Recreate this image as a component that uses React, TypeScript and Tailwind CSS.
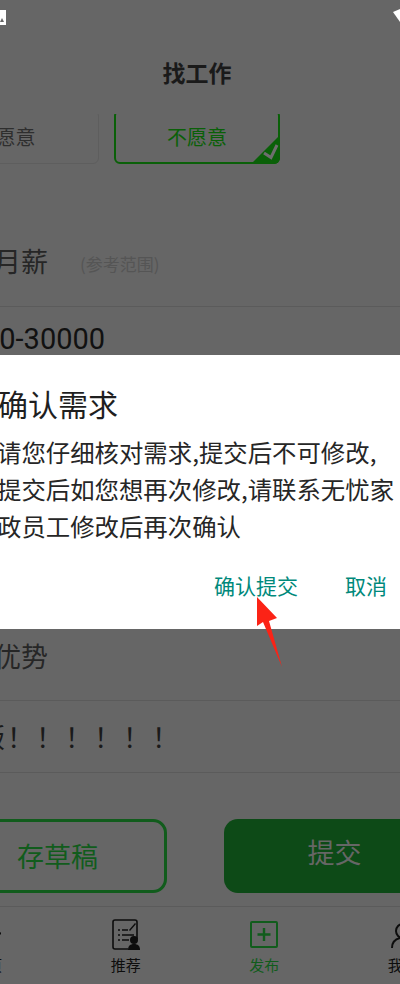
const cjk = "font-['Noto_Sans_CJK_SC','Noto_Sans_CJK_JP',sans-serif]";

function TabItem({ label, active, children }: { label: string; active?: boolean; children: React.ReactNode }) {
  return (
    <div className="flex flex-col items-center">
      <div className="h-[34px] flex items-end">{children}</div>
      <span className={`mt-[5px] text-[15px] leading-[20px] whitespace-nowrap ${active ? 'text-[#115c1c]' : 'text-[#0d0d0d]'}`}>
        {label}
      </span>
    </div>
  );
}

export default function App() {
  return (
    <div className={`relative w-[400px] h-[984px] overflow-hidden bg-[#666666] ${cjk}`}>
      {/* status bar */}
      <div className="h-[60px] relative">
        <svg className="absolute left-0 top-[10px]" width="6" height="16" viewBox="0 0 6 16">
          <path d="M0 0h6v15H0z" fill="#fff" />
          <path d="M0 12l2-4 2 4z" fill="#666" />
        </svg>
        <svg className="absolute right-0 top-[9px]" width="7" height="14" viewBox="0 0 7 14">
          <path d="M7 0L0 3l7 10z" fill="#fff" />
        </svg>
      </div>

      {/* header */}
      <div className="h-[54px] -mt-[2px] mb-[2px] mr-[6px] text-center text-[23px] leading-[28px] font-bold text-[#1a1a1a]">找工作</div>

      {/* choice */}
      <div className="flex gap-[15px] -ml-[68px] h-[50px] overflow-hidden">
        <div className="w-[167px] h-[54px] -mt-[4px] border border-[#5e5e5e] rounded-[6px] flex items-center justify-center text-[20px] text-[#2e2e2e]">
          愿意
        </div>
        <div className="relative w-[166px] h-[54px] -mt-[4px] border-2 border-[#0a6008] rounded-[6px] flex items-center justify-center text-[20px] text-[#0a6008]">
          不愿意
          <svg className="absolute -right-[2px] -bottom-[2px]" width="29" height="29" viewBox="0 0 29 29">
            <path d="M29 0V23a6 6 0 0 1-6 6H0z" fill="#0a6008" />
            <path d="M13 18l7 4.500 6-12.500" fill="none" stroke="#6e6e6e" strokeWidth="3" />
          </svg>
        </div>
      </div>

      {/* salary */}
      <div className="mt-[73px] flex items-center -ml-[6px] h-[48px] box-content pb-[21px] border-b border-[#5b5b5b]">
        <span className="text-[27px] leading-[36px] text-[#262626] w-[86px] whitespace-nowrap">月薪</span>
        <span className="text-[17px] text-[#555555] mt-[6px] whitespace-nowrap">(参考范围)</span>
      </div>
      <div className="-ml-[17px] mt-[11px] font-['Roboto',sans-serif] text-[29px] leading-[42px] text-[#111111]">30-30000</div>

      {/* strengths, upper part sits under the dialog */}
      <div className="mt-[270px] h-[71px] -ml-[6px] text-[27px] leading-[52px] text-[#262626] border-b border-[#5b5b5b]">优势</div>
      <div className="pt-[13px] pb-[12px] border-b border-[#5b5b5b]">
        <div className="-ml-[22px] text-[27px] leading-[46px] text-[#1a1a1a] whitespace-nowrap tracking-[2px]">版！！！！！！</div>
      </div>

      {/* actions */}
      <div className="mt-[46px] flex gap-[57px] -ml-[52px]">
        <div className="w-[219px] h-[74px] shrink-0 border-[3px] border-[#115c1c] rounded-[14px] flex items-center justify-center text-[27px] text-[#115c1c]">
          存草稿
        </div>
        <div className="w-[221px] h-[74px] shrink-0 bg-[#0d4a17] rounded-[14px] flex items-center justify-center text-[27px] text-[#666666]">
          <span className="-mt-[8px]">提交</span>
        </div>
      </div>

      {/* tabs */}
      <div className="absolute bottom-0 left-0 right-0 h-[78px] border-t border-[#5b5b5b]" />
      <div className="absolute bottom-[9px] -left-[82px] w-[554px] grid grid-cols-4">
        <TabItem label="首页">
          <svg width="28" height="28" viewBox="0 0 28 28" fill="none">
            <path d="M0 12L14 1l14 11M5 10v17h17V10" stroke="#0d0d0d" strokeWidth="2" />
          </svg>
        </TabItem>
        <TabItem label="推荐">
          <svg width="28" height="31" viewBox="0 0 28 31" fill="none">
            <path d="M25 20V3a2 2 0 0 0-2-2H3a2 2 0 0 0-2 2v25a2 2 0 0 0 2 2h13" stroke="#0d0d0d" strokeWidth="1.6" />
            <path d="M6 11h2M6 16h2M6 21h2M10 11h6M10 16h12M10 21h7" stroke="#0d0d0d" strokeWidth="1.500" />
            <path d="M17 11l6-7 1 1-6 7z" fill="#0d0d0d" />
            <circle cx="22" cy="21" r="4" fill="#0d0d0d" />
            <path d="M16 31c0-4 2-6 6-6s6 2 6 6z" fill="#0d0d0d" />
          </svg>
        </TabItem>
        <TabItem label="发布" active>
          <svg className="mb-[2px]" width="28" height="27" viewBox="0 0 28 27" fill="none">
            <rect x="1" y="1" width="26" height="25" rx="1" stroke="#115c1c" strokeWidth="2" />
            <path d="M14 7v13M7.500 13.500h13" stroke="#115c1c" strokeWidth="2.400" />
          </svg>
        </TabItem>
        <TabItem label="我的">
          <svg className="mb-[2px]" width="24" height="25" viewBox="0 0 24 25" fill="none">
            <circle cx="12" cy="8" r="7" stroke="#0d0d0d" strokeWidth="2" />
            <path d="M1 25c0-6 4-9 8-10M23 25c0-6-4-9-8-10" stroke="#0d0d0d" strokeWidth="2" />
          </svg>
        </TabItem>
      </div>

      {/* confirm dialog */}
      <div className="absolute left-0 right-0 top-[355px] h-[274px] bg-white">
        <div className="mt-[28px] -ml-[2px] text-[30px] leading-[40px] text-[#1f1f1f]">确认需求</div>
        <div className="mt-[10px] -ml-[3px] text-[24.4px] leading-[37px] text-[#262626] whitespace-nowrap">
          <p>请您仔细核对需求,提交后不可修改,</p>
          <p>提交后如您想再次修改,请联系无忧家</p>
          <p>政员工修改后再次确认</p>
        </div>
        <div className="mt-[26px] flex justify-end gap-[47px] pr-[13px] text-[21px] leading-[30px] text-[#00897b]">
          <span>确认提交</span>
          <span>取消</span>
        </div>
      </div>

      {/* annotation arrow */}
      <svg className="absolute left-[250px] top-[590px]" width="40" height="80" viewBox="0 0 40 80">
        <path d="M7 7L27 28 19 31 32 77 13 32 7 36z" fill="#fb2316" />
      </svg>
    </div>
  );
}
